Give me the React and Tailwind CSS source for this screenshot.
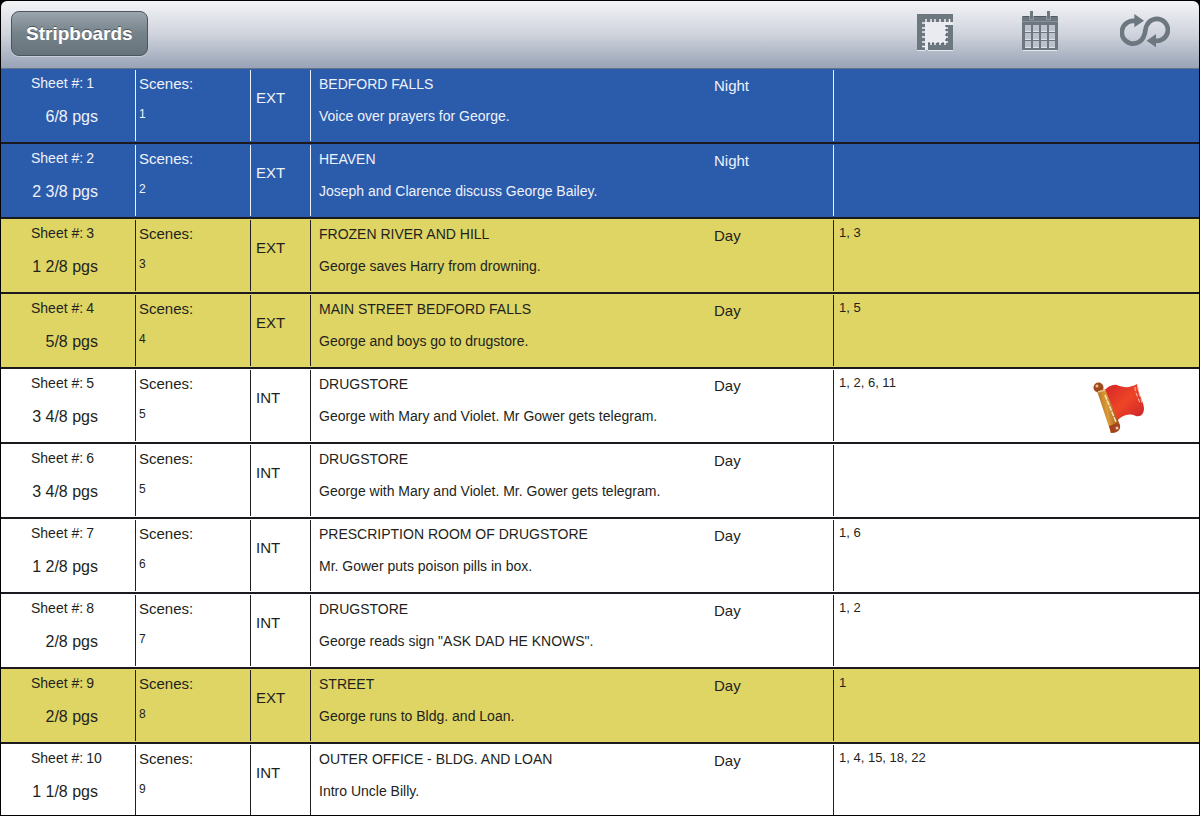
import clsx from "clsx";

const strips = [
    { sheet: 1, pages: "6/8", scenes: "1", set: "EXT", location: "BEDFORD FALLS", synopsis: "Voice over prayers for George.", time: "Night", cast: "" },
    { sheet: 2, pages: "2 3/8", scenes: "2", set: "EXT", location: "HEAVEN", synopsis: "Joseph and Clarence discuss George Bailey.", time: "Night", cast: "" },
    { sheet: 3, pages: "1 2/8", scenes: "3", set: "EXT", location: "FROZEN RIVER AND HILL", synopsis: "George saves Harry from drowning.", time: "Day", cast: "1, 3" },
    { sheet: 4, pages: "5/8", scenes: "4", set: "EXT", location: "MAIN STREET BEDFORD FALLS", synopsis: "George and boys go to drugstore.", time: "Day", cast: "1, 5" },
    { sheet: 5, pages: "3 4/8", scenes: "5", set: "INT", location: "DRUGSTORE", synopsis: "George with Mary and Violet. Mr Gower gets telegram.", time: "Day", cast: "1, 2, 6, 11", flagged: true },
    { sheet: 6, pages: "3 4/8", scenes: "5", set: "INT", location: "DRUGSTORE", synopsis: "George with Mary and Violet. Mr. Gower gets telegram.", time: "Day", cast: "" },
    { sheet: 7, pages: "1 2/8", scenes: "6", set: "INT", location: "PRESCRIPTION ROOM OF DRUGSTORE", synopsis: "Mr. Gower puts poison pills in box.", time: "Day", cast: "1, 6" },
    { sheet: 8, pages: "2/8", scenes: "7", set: "INT", location: "DRUGSTORE", synopsis: 'George reads sign "ASK DAD HE KNOWS".', time: "Day", cast: "1, 2" },
    { sheet: 9, pages: "2/8", scenes: "8", set: "EXT", location: "STREET", synopsis: "George runs to Bldg. and Loan.", time: "Day", cast: "1" },
    { sheet: 10, pages: "1 1/8", scenes: "9", set: "INT", location: "OUTER OFFICE - BLDG. AND LOAN", synopsis: "Intro Uncle Billy.", time: "Day", cast: "1, 4, 15, 18, 22" },
];

// strip colour follows the usual board convention: set + time of day
function stripColor(strip) {
    if (strip.time === "Night") return "bg-[#2b5bab] text-[#eef2fb]";
    if (strip.set === "EXT") return "bg-[#ded564] text-[#231f20]";
    return "bg-white text-[#231f20]";
}

function StampIcon() {
    const ticks = [9, 14, 18, 23, 28];
    return (
        <svg width="50" height="40" viewBox="0 0 50 40" aria-hidden="true">
            <path d="M7 39.500H15M18 39.500H43" stroke="#e3e6ec" />
            <rect x="7" y="3" width="36" height="36" fill="#6c7780" />
            <rect x="15" y="11" width="21" height="21" fill="#e9ebf0" />
            <path d="M15 11H43V14H15ZM15 11H18V39H15Z" fill="#e9ebf0" />
            <g stroke="#f1f2f5" strokeWidth="1.500">
                {ticks.map((t) => (
                    <path key={t} d={`M${t + 7} 8V12M12 ${t + 3}H16`} />
                ))}
                <path d="M39.500 8V12M12 35.500H16" />
                {ticks.slice(1).map((t) => (
                    <path key={t} d={`M${t + 7} 31V34M35 ${t + 3}H38`} />
                ))}
            </g>
            <g stroke="#4d565e" strokeWidth="1">
                {ticks.slice(1).map((t) => (
                    <path key={t} d={`M${t + 5} 31V33M35 ${t + 1}H37`} />
                ))}
            </g>
        </svg>
    );
}

function CalendarIcon() {
    return (
        <svg width="50" height="40" viewBox="0 0 50 40" aria-hidden="true">
            <path d="M8 39.500H42" stroke="#e3e6ec" />
            <rect x="7" y="5" width="36" height="34" rx="1" fill="#6c7780" />
            <path d="M8 5.500H42" stroke="#4f5961" />
            <path d="M7 10.500H43" stroke="#8b949d" />
            <path d="M15 0H18V8H15ZM32 0H35V8H32Z" fill="#6c7780" />
            <path d="M14.500 5V8.500H18.500V5M31.500 5V8.500H35.500V5" stroke="#9299a2" fill="none" />
            {[14, 22, 30].map((y) =>
                [10, 18, 26, 34].map((x) => (
                    <g key={`${x}-${y}`}>
                        <rect x={x} y={y} width="6" height="6" fill="#bcc1cb" />
                        <path d={`M${x} ${y + 6.5}H${x + 6}`} stroke="#dfe2e8" />
                    </g>
                ))
            )}
        </svg>
    );
}

function LoopIcon() {
    return (
        <svg width="50" height="40" viewBox="30 18 150 120" aria-hidden="true">
            <path
                d="M78 49A34 34 0 1 0 102 92C108 80 104 70 111 60A33 33 0 1 1 134 107"
                fill="none"
                stroke="#6c7780"
                strokeWidth="14"
            />
            <path d="M73 27L102 47L73 67ZM138 87L110 107L138 127Z" fill="#6c7780" />
        </svg>
    );
}

function FlagIcon() {
    return (
        <svg width="52" height="52" viewBox="0 0 52 52" role="img" aria-label="Flagged">
            <defs>
                <linearGradient id="cloth" x1="0" y1="0" x2="1" y2="1">
                    <stop offset="0" stopColor="#d3242a" />
                    <stop offset="0.5" stopColor="#ee4526" />
                    <stop offset="1" stopColor="#c9202c" />
                </linearGradient>
                <linearGradient id="pole" x1="0" y1="0.6" x2="1" y2="0.4">
                    <stop offset="0" stopColor="#a8661f" />
                    <stop offset="0.45" stopColor="#dc9c38" />
                    <stop offset="1" stopColor="#8f3d14" />
                </linearGradient>
            </defs>
            <path d="M11 9C15 4 20 2 24 3C31 6 37 6 44 2C45 12 50 18 51 26C51 32 48 35 43 34C36 31 29 33 24 39Z" fill="url(#cloth)" />
            <path d="M42 5C42 12 46 16 47 22M45 5C45 11 49 17 49 22" stroke="#f6c0bb" strokeWidth="1" strokeDasharray="4 2" fill="none" />
            <path d="M4 9L12 7L27 43C28 48 24 51 18 51Z" fill="url(#pole)" />
            <path d="M12 13L23 40" stroke="#f8e3bd" strokeWidth="1.500" strokeDasharray="5 1" />
            <path d="M16 44L24 41L27 44C27 48 24 51 18 51Z" fill="#a5441c" />
            <circle cx="24" cy="46" r="1.500" fill="#edc6b4" />
            <circle cx="5.500" cy="5.500" r="5" fill="#a04a1b" />
            <circle cx="4" cy="4" r="1.500" fill="#e8bd93" />
            <path d="M5 10L12 8" stroke="#e9c592" strokeWidth="1.500" />
        </svg>
    );
}

function Toolbar() {
    return (
        <header className="flex h-[68px] items-start justify-between rounded-t-md border-b border-[#66728a] bg-linear-to-b from-[#f3f4f7] via-[#cfd3dc] to-[#98a3b6] pt-[10px] pr-[29px] pl-[10px]">
            <button
                type="button"
                className="h-[45px] rounded-lg border border-[#4d565e] bg-linear-to-b from-[#9aa5ad] via-[#76828a] to-[#67737b] px-[14px] text-[19px] leading-6 font-bold text-white shadow-[0_1px_0_#c8cdd6] text-shadow-[0_-1px_0_#4d565e]"
            >
                Stripboards
            </button>
            <nav className="flex gap-[55px]">
                <button type="button" aria-label="Strip layout">
                    <StampIcon />
                </button>
                <button type="button" aria-label="Calendar">
                    <CalendarIcon />
                </button>
                <button type="button" aria-label="Sync">
                    <LoopIcon />
                </button>
            </nav>
        </header>
    );
}

function Cell({ first, last, className, children }) {
    return (
        <td className={clsx("border-[#1c1a1f] p-0 pt-px align-top", !last && "border-b-2 pb-px")}>
            <div className={clsx(last ? "h-[70px]" : "h-[71px]", !first && "border-l border-current", className)}>
                {children}
            </div>
        </td>
    );
}

function Strip({ strip, last }) {
    return (
        <tr className={stripColor(strip)}>
            <Cell first last={last} className="pt-[3px] pl-[30px]">
                <p className="flex gap-[3px] text-[14px] leading-5">
                    <span>Sheet #:</span>
                    <span>{strip.sheet}</span>
                </p>
                <p className="mt-3 pr-[37px] text-right text-[16px] leading-6">{strip.pages} pgs</p>
            </Cell>
            <Cell last={last} className="pt-[3px] pl-[3px]">
                <p className="text-[15px] leading-[22px]">Scenes:</p>
                <p className="mt-2 text-[12px] leading-[22px]">{strip.scenes}</p>
            </Cell>
            <Cell last={last} className="pt-4 pl-[5px]">
                <p className="text-[15px] leading-6">{strip.set}</p>
            </Cell>
            <Cell last={last} className="flex justify-between pt-1 pl-2">
                <div className="text-[14px] leading-5">
                    <p>{strip.location}</p>
                    <p className="mt-3">{strip.synopsis}</p>
                </div>
                <p className="w-[119px] text-[15px] leading-6">{strip.time}</p>
            </Cell>
            <Cell last={last} className="flex justify-between pt-[3px] pr-[54px] pl-[5px]">
                <p className="text-[13px] leading-5">{strip.cast}</p>
                {strip.flagged && (
                    <div className="pt-[9px]">
                        <FlagIcon />
                    </div>
                )}
            </Cell>
        </tr>
    );
}

export default function App() {
    return (
        <main className="bg-black p-px font-['Liberation_Sans',Arial,sans-serif]">
            <Toolbar />
            <table className="w-full table-fixed border-separate border-spacing-0">
                <colgroup>
                    <col className="w-[134px]" />
                    <col className="w-[115px]" />
                    <col className="w-[60px]" />
                    <col className="w-[523px]" />
                    <col />
                </colgroup>
                <tbody>
                    {strips.map((strip, i) => (
                        <Strip key={strip.sheet} strip={strip} last={i === strips.length - 1} />
                    ))}
                </tbody>
            </table>
        </main>
    );
}
